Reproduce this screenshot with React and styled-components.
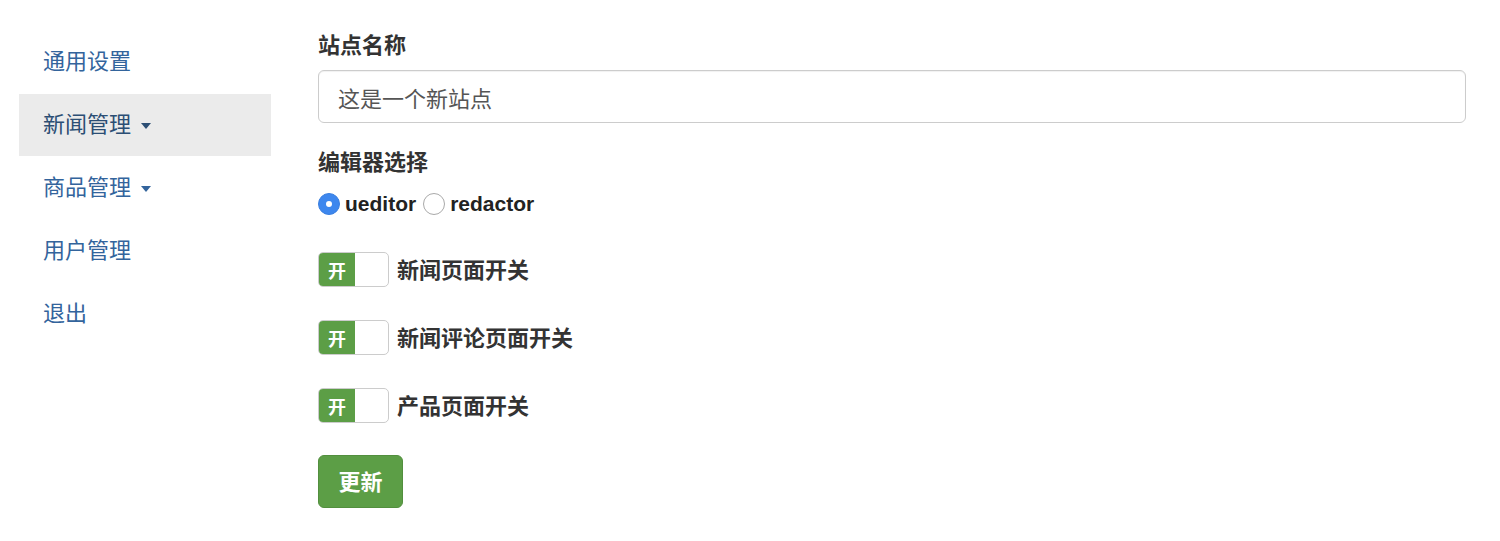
import React, { useState } from 'react';
import styled, { createGlobalStyle } from 'styled-components';

const GlobalStyle = createGlobalStyle`
  body {
    margin: 0;
    background: #fff;
    font-family: "Liberation Sans", "Noto Sans CJK SC", sans-serif;
    color: #333;
  }
`;

const Page = styled.div`
  display: flex;
  padding: 31px 34px 0 19px;
`;

const Sidebar = styled.ul`
  list-style: none;
  margin: 0;
  padding: 0;
  width: 252px;
  flex-shrink: 0;
`;

const NavItem = styled.li`
  height: 62px;
  margin-bottom: 1px;
  padding: 0 24px 1px;
  display: flex;
  align-items: center;
  font-size: 22px;
  line-height: 30px;
  box-sizing: border-box;
  color: ${props => (props.active ? '#2b4e74' : '#33649c')};
  background: ${props => (props.active ? '#ebebeb' : 'transparent')};
  cursor: pointer;
`;

const Caret = styled.span`
  display: inline-block;
  margin-left: 10px;
  margin-top: 3px;
  border-top: 6px solid currentColor;
  border-left: 5px solid transparent;
  border-right: 5px solid transparent;
`;

const Main = styled.form`
  flex: 1;
  margin-left: 47px;
  display: flex;
  flex-direction: column;
  align-items: flex-start;
`;

const Label = styled.div`
  font-size: 22px;
  font-weight: bold;
  line-height: 30px;
  margin-top: ${props => props.top || 0}px;
`;

const Input = styled.input`
  box-sizing: border-box;
  width: 100%;
  height: 53px;
  margin-top: 9px;
  padding: 0 19px;
  border: 1px solid #cccccc;
  border-radius: 6px;
  font-size: 22px;
  font-family: "Liberation Sans", "Noto Sans CJK SC", sans-serif;
  color: #555;
  box-shadow: inset 0 1px 1px rgba(0, 0, 0, 0.06);
  outline: none;
`;

const RadioRow = styled.div`
  display: flex;
  align-items: center;
  height: 30px;
  margin-top: 11px;
`;

const RadioOption = styled.label`
  display: flex;
  align-items: center;
  margin-right: 7px;
  font-size: 21px;
  font-weight: bold;
  color: #222;
  cursor: pointer;
`;

const RadioDot = styled.span`
  box-sizing: border-box;
  width: 22px;
  height: 22px;
  border-radius: 50%;
  margin-right: 5px;
  display: flex;
  align-items: center;
  justify-content: center;
  background: ${props => (props.checked ? '#3d87ee' : '#fff')};
  border: 1px solid ${props => (props.checked ? '#3a7fe0' : '#a9a9a9')};

  &::after {
    content: '';
    width: 6px;
    height: 6px;
    border-radius: 50%;
    background: #fff;
    display: ${props => (props.checked ? 'block' : 'none')};
  }
`;

const SwitchRow = styled.div`
  display: flex;
  align-items: center;
  margin-top: 33px;
`;

const Switch = styled.span`
  box-sizing: border-box;
  display: flex;
  width: 71px;
  height: 35px;
  border: 1px solid #cccccc;
  border-radius: 5px;
  overflow: hidden;
  background: #fff;
  cursor: pointer;
`;

const SwitchOn = styled.span`
  width: 36px;
  display: flex;
  align-items: center;
  justify-content: center;
  background: #5c9e46;
  color: #fff;
  font-size: 18px;
  font-weight: bold;
`;

const SwitchLabel = styled.span`
  margin-left: 8px;
  margin-top: -3px;
  font-size: 22px;
  font-weight: bold;
  color: #333;
`;

const Button = styled.button`
  margin-top: 32px;
  width: 85px;
  height: 53px;
  padding: 0 0 4px;
  border: 1px solid #528f3e;
  border-radius: 6px;
  background: #5c9e46;
  color: #fff;
  font-size: 22px;
  font-weight: bold;
  font-family: "Liberation Sans", "Noto Sans CJK SC", sans-serif;
  cursor: pointer;
`;

const navItems = [
  { name: '通用设置' },
  { name: '新闻管理', caret: true, active: true },
  { name: '商品管理', caret: true },
  { name: '用户管理' },
  { name: '退出' },
];

const switches = ['新闻页面开关', '新闻评论页面开关', '产品页面开关'];

function App() {
  const [editor, setEditor] = useState('ueditor');

  return <>
    <GlobalStyle />
    <Page>
      <Sidebar>
        {navItems.map(item => (
          <NavItem key={item.name} active={item.active}>
            {item.name}
            {item.caret && <Caret />}
          </NavItem>
        ))}
      </Sidebar>

      <Main onSubmit={e => e.preventDefault()}>
        <Label>站点名称</Label>
        <Input type="text" defaultValue="这是一个新站点" />

        <Label top={25}>编辑器选择</Label>
        <RadioRow>
          {['ueditor', 'redactor'].map(name => (
            <RadioOption key={name} onClick={() => setEditor(name)}>
              <RadioDot checked={editor === name} />
              {name}
            </RadioOption>
          ))}
        </RadioRow>

        {switches.map(s => (
          <SwitchRow key={s}>
            <Switch>
              <SwitchOn>开</SwitchOn>
            </Switch>
            <SwitchLabel>{s}</SwitchLabel>
          </SwitchRow>
        ))}

        <Button type="submit">更新</Button>
      </Main>
    </Page>
  </>
}

export default App;
